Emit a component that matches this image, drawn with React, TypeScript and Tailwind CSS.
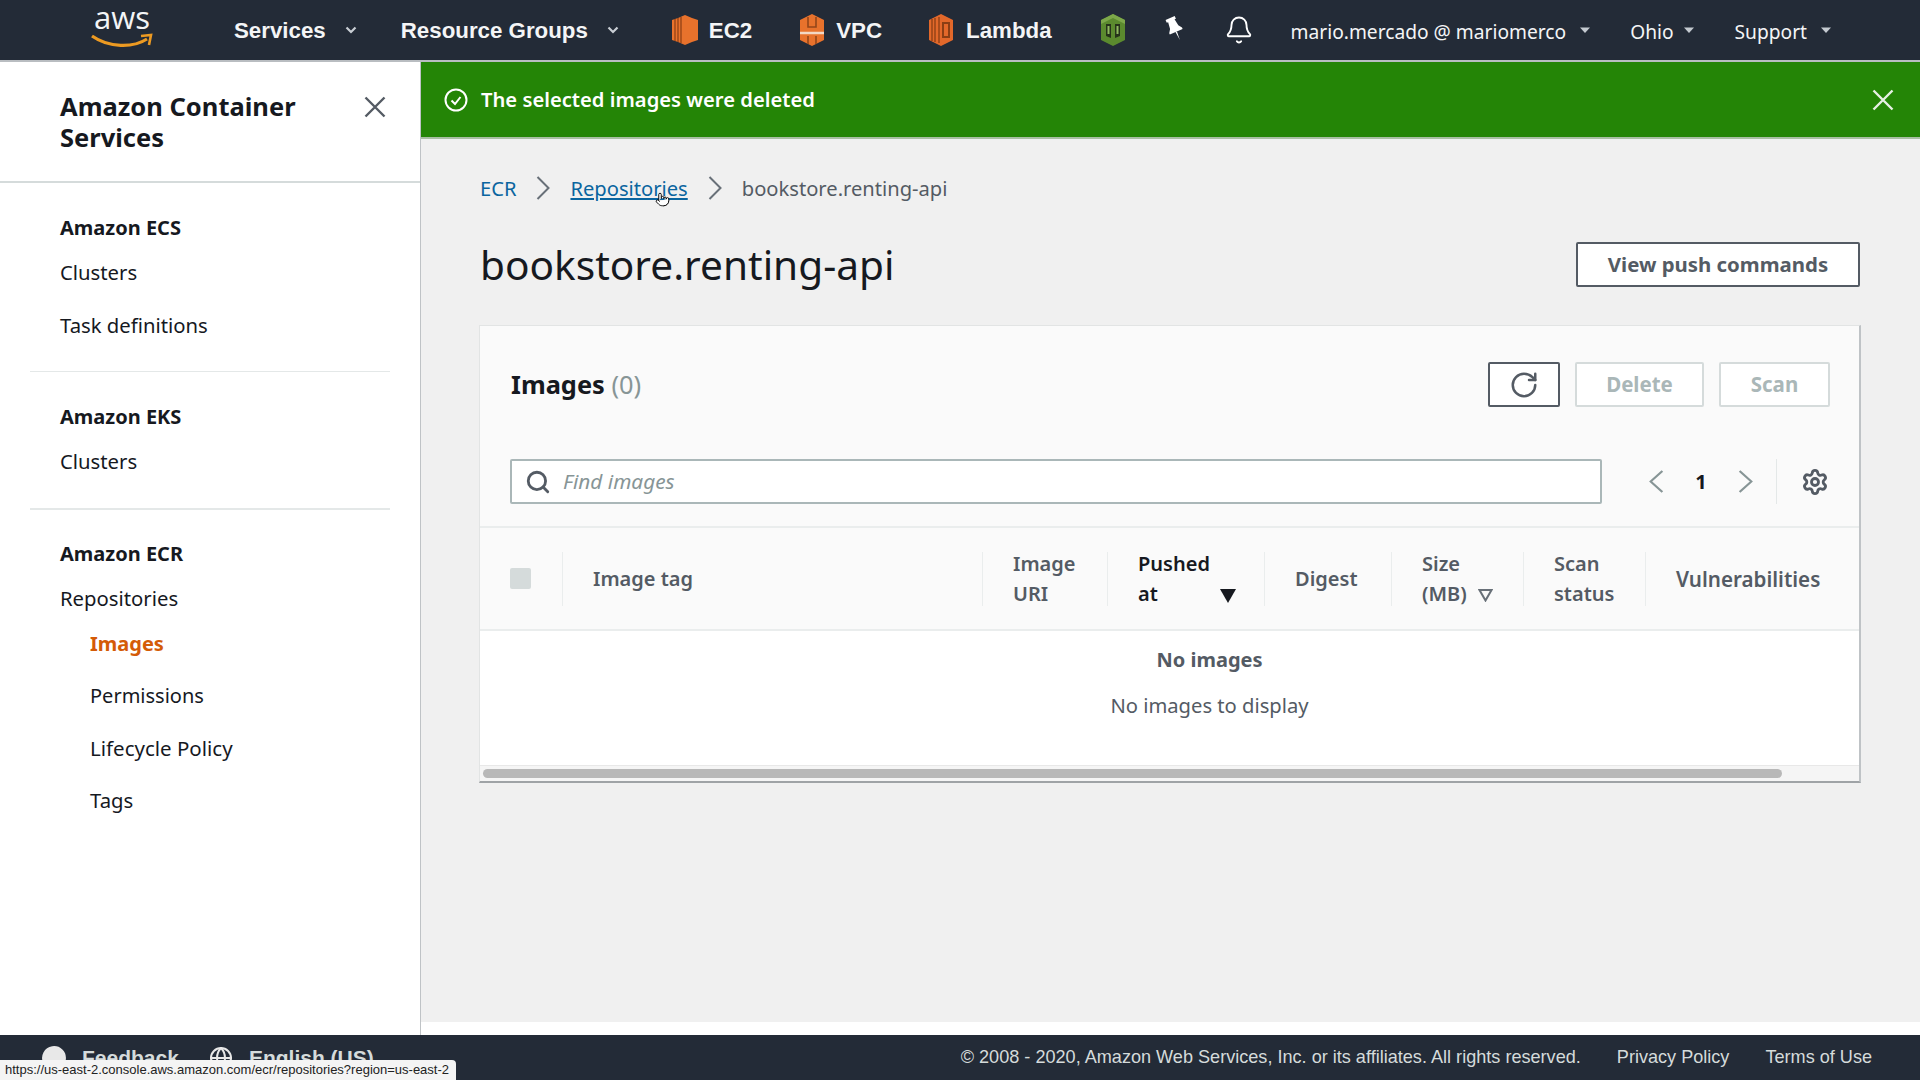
import React from "react";
import { Pointer, RotateCw, Search, Settings, Bell, Globe, MessageCircle } from "lucide-react";

const Caret = ({ className = "" }: { className?: string }) => (
  <svg width="12" height="8" viewBox="0 0 12 8" className={className}>
    <path d="M1.5 1.5 L6 6 L10.5 1.5" fill="none" stroke="#c9ced4" strokeWidth="2.2" />
  </svg>
);

const Solid = () => (
  <svg width="12" height="8" viewBox="0 0 12 8">
    <path d="M1 1.5 H11 L6 7 Z" fill="#c4cad0" />
  </svg>
);

const Cross = ({ size = 22, stroke = "#545b64", className = "" }: { size?: number; stroke?: string; className?: string }) => (
  <svg width={size} height={size} viewBox="0 0 22 22" className={className}>
    <path d="M1.5 1.5 L20.5 20.5 M20.5 1.5 L1.5 20.5" fill="none" stroke={stroke} strokeWidth="2.4" />
  </svg>
);

const Chev = ({ dir = "right", w = 14, h = 24, stroke = "#687078", className = "" }: { dir?: "left" | "right"; w?: number; h?: number; stroke?: string; className?: string }) => (
  <svg width={w} height={h} viewBox="0 0 14 24" preserveAspectRatio="none" className={className}>
    <path d={dir === "right" ? "M1.5 1 L12.5 12 L1.5 23" : "M12.5 1 L1.5 12 L12.5 23"} fill="none" stroke={stroke} strokeWidth="2" />
  </svg>
);

const Ec2 = () => (
  <svg width="26" height="30" viewBox="0 0 26 30">
    <path d="M6 3 L13 0 L20 3 L26 5 V25 L20 27 L13 30 L6 27 L0 25 V5 Z" fill="#e8722c" />
    <path d="M3 4 V26 M6 3 V27 M9 2 V28" stroke="#8a3e14" strokeWidth="1.2" />
  </svg>
);

const Vpc = () => (
  <svg width="24" height="32" viewBox="0 0 24 32">
    <path d="M12 0 L24 6 V26 L12 32 L0 26 V6 Z" fill="#e8722c" />
    <path d="M0 19 H24" stroke="#f3d8c4" strokeWidth="2.5" />
    <path d="M8 3 V13 H16 V3 M8 22 V30 M16 22 V30" fill="none" stroke="#93461a" strokeWidth="1.6" />
  </svg>
);

const Lambda = () => (
  <svg width="24" height="32" viewBox="0 0 24 32">
    <path d="M12 0 L24 6 V26 L12 32 L0 26 V6 Z" fill="#e2682a" />
    <path d="M3 5 V27 M6 4 V28 M10 3 V29" stroke="#8a3e14" strokeWidth="1.3" />
    <path d="M14 9 H20 V23 H14 Z" fill="none" stroke="#8a3e14" strokeWidth="2" />
  </svg>
);

const GreenBox = () => (
  <svg width="24" height="32" viewBox="0 0 24 32">
    <path d="M12 0 L24 6 V26 L12 32 L0 26 V6 Z" fill="#5b8a2e" />
    <path d="M12 0 L24 6 V10 L12 4 L0 10 V6 Z" fill="#7da84a" />
    <path d="M5 10 H10 V24 L5 22 Z M14 10 H19 V22 L14 24 Z" fill="#26331a" />
    <path d="M6.5 12 H8.5 V20 H6.5 Z M15.5 12 H17.5 V20 H15.5 Z" fill="#8fb860" />
  </svg>
);

const Tack = ({ className = "" }: { className?: string }) => (
  <svg width="20" height="26" viewBox="0 0 20 26" className={className}>
    <g transform="rotate(-24 10 13)">
      <path d="M5 1 H15 V4 H13.5 L14.5 11 L17 14.5 V16 H3 V14.5 L5.5 11 L6.5 4 H5 Z" fill="white" />
      <path d="M9.2 16 H10.8 L10 25 Z" fill="white" />
    </g>
  </svg>
);

const NavItem = ({ children, className }: { children: React.ReactNode; className: string }) => (
  <span className={"relative top-[1px] text-[22.3px] font-bold text-[#f4f5f6] " + className}>{children}</span>
);

const RightNav = ({ children, className }: { children: React.ReactNode; className: string }) => (
  <span className={"relative top-[2px] text-[19.2px] text-[#f4f5f6] font-['Noto_Sans',sans-serif] " + className}>{children}</span>
);

const SideLink = ({ children, className = "" }: { children: React.ReactNode; className?: string }) => (
  <div className={"text-[#16191f] " + className}>{children}</div>
);

const Th = ({ w, children, color = "text-[#545b64]" }: { w: string; children: React.ReactNode; color?: string }) => (
  <div className={"relative h-full flex items-center pl-[30px] text-[20px] leading-[30px] font-semibold " + w + " " + color}>
    {children}
  </div>
);

const Sep = () => <div className="w-px h-[54px] bg-[#eaeded] shrink-0" />;

export default function App() {
  return (
    <div className="relative w-[1920px] h-[1080px] overflow-hidden flex flex-col bg-white font-['Noto_Sans',sans-serif]">
      {/* top nav */}
      <header className="h-[62px] shrink-0 bg-[#232b37] border-b-2 border-[#b9bdc1] flex items-center font-['Liberation_Sans',sans-serif]">
        <div className="ml-[91px] w-[62px] self-start mt-[5px] flex flex-col items-center">
          <span className="h-[24px] text-[31px] leading-[24px] text-[#f4f5f6] font-['Open_Sans',sans-serif]">aws</span>
          <svg width="62" height="16" viewBox="0 0 62 16" className="mt-[4px]">
            <path d="M1 3 C18 15 42 15 56 6" fill="none" stroke="#ec9a22" strokeWidth="3.2" />
            <path d="M50 3 L60 2 L58 12" fill="none" stroke="#ec9a22" strokeWidth="2.6" />
          </svg>
        </div>
        <NavItem className="ml-[81px]">Services</NavItem>
        <Caret className="ml-[19px]" />
        <NavItem className="ml-[44px]">Resource Groups</NavItem>
        <Caret className="ml-[19px]" />
        <div className="ml-[53px]"><Ec2 /></div>
        <NavItem className="ml-[11px]">EC2</NavItem>
        <div className="ml-[48px]"><Vpc /></div>
        <NavItem className="ml-[12px]">VPC</NavItem>
        <div className="ml-[47px]"><Lambda /></div>
        <NavItem className="ml-[13px]">Lambda</NavItem>
        <div className="ml-[49px]"><GreenBox /></div>
        <Tack className="ml-[40px] mb-[3px]" />
        <Bell size={30} strokeWidth={1.5} className="ml-[39px] text-white" />
        <RightNav className="ml-[37px]">mario.mercado @ mariomerco</RightNav>
        <div className="ml-[13px]"><Solid /></div>
        <RightNav className="ml-[39px]">Ohio</RightNav>
        <div className="ml-[9px]"><Solid /></div>
        <RightNav className="ml-[40px]">Support</RightNav>
        <div className="ml-[13px]"><Solid /></div>
      </header>

      {/* middle */}
      <div className="flex-1 flex min-h-0">
        <aside className="w-[421px] shrink-0 border-r border-[#bfc3c6] text-[20.3px]">
          <div className="h-[121px] border-b-2 border-[#d5dbdb] pl-[60px] pr-[34px] pt-[30px] flex justify-between items-start">
            <h2 className="text-[25.5px] leading-[31px] font-bold text-[#16191f] -mt-[1px]">Amazon Container<br />Services</h2>
            <Cross className="mt-[4px]" />
          </div>
          <nav className="pt-[29px] leading-[32px]">
            <div className="pl-[60px]">
              <SideLink className="font-bold text-[20px]">Amazon ECS</SideLink>
              <SideLink className="mt-[12px]">Clusters</SideLink>
              <SideLink className="mt-[21px]">Task definitions</SideLink>
            </div>
            <div className="mx-[30px] mt-[30px] h-px bg-[#e4e8e8]" />
            <div className="pl-[60px] mt-[29px]">
              <SideLink className="font-bold text-[20px]">Amazon EKS</SideLink>
              <SideLink className="mt-[12px]">Clusters</SideLink>
            </div>
            <div className="mx-[30px] mt-[31px] h-[2px] bg-[#e4e8e8]" />
            <div className="pl-[60px] mt-[28px]">
              <SideLink className="font-bold text-[20px]">Amazon ECR</SideLink>
              <SideLink className="mt-[12px]">Repositories</SideLink>
              <div className="pl-[30px]">
                <div className="mt-[14px] text-[20px] font-bold text-[#d45b07]">Images</div>
                <SideLink className="mt-[20px] text-[20px]">Permissions</SideLink>
                <SideLink className="mt-[20px] text-[20.5px]">Lifecycle Policy</SideLink>
                <SideLink className="mt-[20px]">Tags</SideLink>
              </div>
            </div>
          </nav>
        </aside>

        <div className="flex-1 min-w-0 flex flex-col">
          <main className="h-[960px] bg-[#f0f0f0] flex flex-col">
            <div className="h-[77px] shrink-0 bg-[#248506] border-b-2 border-[#a9bfa3] flex items-center pl-[23px] pr-[26px] text-white">
              <svg width="24" height="24" viewBox="0 0 24 24" fill="none" stroke="white" strokeWidth="2">
                <circle cx="12" cy="12" r="10.5" />
                <path d="M7.5 12.5 L11 16 L16.5 9" />
              </svg>
              <span className="ml-[13px] text-[20.2px] font-semibold">The selected images were deleted</span>
              <Cross stroke="#e7f0e4" className="ml-auto" />
            </div>

            <div className="pl-[59px] pr-[60px] flex-1 min-h-0">
              <div className="mt-[33px] h-[32px] flex items-center text-[20.15px] leading-[32px]">
                <span className="text-[#0a659f]">ECR</span>
                <Chev className="mx-[20px]" />
                <span className="relative text-[#0a659f] underline underline-offset-2">
                  Repositories
                  <Pointer size={15} fill="white" strokeWidth={1.5} className="absolute left-[85px] top-[20px] text-black" />
                </span>
                <Chev className="mx-[20px]" />
                <span className="text-[#545b64]">bookstore.renting-api</span>
              </div>

              <div className="mt-[39px] flex items-center justify-between h-[44px]">
                <h1 className="text-[40.6px] leading-[48px] text-[#16191f] font-normal">bookstore.renting-api</h1>
                <button className="w-[284px] h-[45px] -mt-[1px] bg-white border-2 border-[#545b64] rounded-[2px] text-[20.4px] font-bold text-[#545b64]">View push commands</button>
              </div>

              <section className="mt-[38px] -ml-[1px] w-[1382px] border border-[#e2e4e4] border-r-2 border-r-[#bfc3c6] border-b-2 border-b-[#9fa3a6] bg-[#fafafa]">
                <div className="h-[202px] pl-[30px] pr-[29px] pt-[36px] border-b-2 border-[#eaeded]">
                  <div className="flex items-center h-[45px]">
                    <h2 className="ml-[1px] text-[25.4px] font-bold text-[#16191f]">Images <span className="font-normal text-[#879596]">(0)</span></h2>
                    <button className="ml-auto w-[72px] h-[45px] bg-white border-2 border-[#545b64] rounded-[2px] flex items-center justify-center text-[#545b64]">
                      <RotateCw size={30} strokeWidth={2} />
                    </button>
                    <button className="ml-[15px] w-[129px] h-[45px] bg-white border-2 border-[#d5dbdb] rounded-[2px] text-[20.5px] font-bold text-[#aab7b8]">Delete</button>
                    <button className="ml-[15px] w-[111px] h-[45px] bg-white border-2 border-[#d5dbdb] rounded-[2px] text-[20.5px] font-bold text-[#aab7b8]">Scan</button>
                  </div>
                  <div className="mt-[52px] flex items-center h-[45px]">
                    <div className="w-[1092px] h-[45px] bg-white border-2 border-[#aab7b8] rounded-[2px] flex items-center pl-[13px]">
                      <Search size={26} strokeWidth={2.6} className="text-[#545b64]" />
                      <span className="ml-[12px] text-[20.8px] italic text-[#879596]">Find images</span>
                    </div>
                    <Chev dir="left" w={15} h={23} stroke="#879596" className="ml-[47px]" />
                    <span className="w-[74px] text-center text-[20px] font-bold text-[#16191f]">1</span>
                    <Chev w={15} h={23} stroke="#879596" />
                    <div className="ml-[23px] w-px h-[45px] bg-[#e4e8e8]" />
                    <Settings size={28} strokeWidth={2.4} className="ml-[24px] text-[#545b64]" />
                  </div>
                </div>

                <div className="h-[103px] flex items-center border-b-2 border-[#eaeded]">
                  <div className="w-[82px] shrink-0 pl-[30px]">
                    <div className="w-[21px] h-[21px] rounded-[2px] bg-[#d5dbdb]" />
                  </div>
                  <Sep />
                  <Th w="w-[419px]">Image tag</Th>
                  <Sep />
                  <Th w="w-[124px]">Image<br />URI</Th>
                  <Sep />
                  <Th w="w-[156px]" color="text-[#16191f]">
                    <span>Pushed<br />at</span>
                    <svg width="16" height="14" viewBox="0 0 16 14" className="absolute left-[112px] top-[61px]"><path d="M0 0 H16 L8 14 Z" fill="#16191f" /></svg>
                  </Th>
                  <Sep />
                  <Th w="w-[126px]">Digest</Th>
                  <Sep />
                  <Th w="w-[131px]">
                    <span>Size<br />(MB)</span>
                    <svg width="15" height="13" viewBox="0 0 15 13" className="absolute left-[86px] top-[61px]"><path d="M1.5 1 H13.5 L7.5 11.5 Z" fill="none" stroke="#687078" strokeWidth="2" /></svg>
                  </Th>
                  <Sep />
                  <Th w="w-[121px]">Scan<br />status</Th>
                  <Sep />
                  <Th w="flex-1"><span className="text-[20.6px]">Vulnerabilities</span></Th>
                </div>

                <div className="h-[134px] bg-white flex flex-col items-center pt-[13px] pl-[80px] leading-[32px] text-[#545b64]">
                  <div className="font-bold text-[20px]">No images</div>
                  <div className="mt-[13px] text-[20.2px]">No images to display</div>
                </div>

                <div className="h-[16px] bg-[#f5f5f5] border-t border-[#e8e8e8] pl-[3px] pt-[3px]">
                  <div className="w-[1299px] h-[9px] rounded-full bg-[#b8b8b8]" />
                </div>
              </section>
            </div>
          </main>
        </div>
      </div>

      {/* footer */}
      <footer className="h-[45px] shrink-0 bg-[#232b37] flex items-center font-['Liberation_Sans',sans-serif] text-[18.1px] text-[#d5dbdb]">
        <MessageCircle size={26} fill="#e8e8e8" className="ml-[41px] text-[#e8e8e8]" />
        <span className="ml-[15px] text-[21px] font-semibold">Feedback</span>
        <Globe size={24} className="ml-[30px] text-[#e8e8e8]" />
        <span className="ml-[16px] text-[21px] font-semibold">English (US)</span>
        <span className="ml-auto">© 2008 - 2020, Amazon Web Services, Inc. or its affiliates. All rights reserved.</span>
        <span className="ml-[36px]">Privacy Policy</span>
        <span className="ml-[36px] mr-[48px]">Terms of Use</span>
      </footer>

      <div className="absolute left-0 bottom-0 w-[456px] h-[20px] bg-[#f4f4f4] rounded-tr-[4px] pl-[5px] font-['Liberation_Sans',sans-serif] text-[13px] leading-[19px] text-[#222] whitespace-nowrap">
        https://us-east-2.console.aws.amazon.com/ecr/repositories?region=us-east-2
      </div>
    </div>
  );
}
